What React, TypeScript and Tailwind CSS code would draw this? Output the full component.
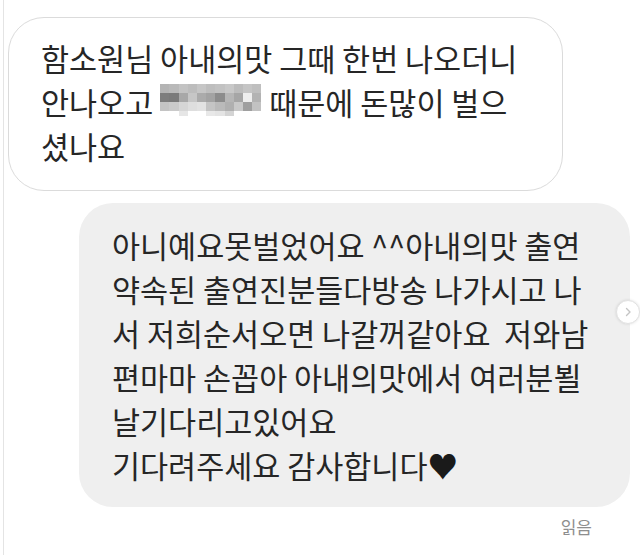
const mosaic = [
  ["bg-[#b4b4b4]", "bg-[#b9b9b9]", "bg-[#c3c3c3]", "bg-[#bdbdbd]", "bg-[#c6c6c6]", "bg-[#bebebe]", "bg-[#c2c2c2]", "bg-[#c8c8c8]", "bg-[#bcbcbc]", "bg-[#c5c5c5]", "bg-[#bfbfbf]"],
  ["bg-[#7d7d7d]", "bg-[#7a7a7a]", "bg-[#a8a8a8]", "bg-[#c6c6c6]", "bg-[#ababab]", "bg-[#a3a3a3]", "bg-[#8c8c8c]", "bg-[#b6b6b6]", "bg-[#a6a6a6]", "bg-[#eeeeee]", "bg-[#b3b3b3]"],
  ["bg-[#c4c4c4]", "bg-[#cacaca]", "bg-[#d6d6d6]", "bg-[#dedede]", "bg-[#e2e2e2]", "bg-[#c4c4c4]", "bg-[#bababa]", "bg-[#b0b0b0]", "bg-[#c9c9c9]", "bg-[#9f9f9f]", "bg-[#c2c2c2]"],
];
const mosaicTail = ["bg-white", "bg-white", "bg-[#e6e6e6]", "bg-white", "bg-white", "bg-[#e8e8e8]", "bg-[#e4e4e4]", "bg-[#d4d4d4]", "bg-white", "bg-white", "bg-white"];

const replyLines = [
  "아니예요못벌었어요 ^^아내의맛 출연",
  "약속된 출연진분들다방송 나가시고 나",
  "서 저희순서오면 나갈꺼같아요  저와남",
  "편마마 손꼽아 아내의맛에서 여러분뵐",
  "날기다리고있어요",
];

const Mosaic = () => (
  <div className="ml-[7px] mr-[8px] mt-[4px] self-start w-[101px]">
    {mosaic.map((row, r) => (
      <div key={r} className="grid grid-cols-11 h-[9px]">
        {row.map((c, i) => (
          <div key={i} className={c} />
        ))}
      </div>
    ))}
    <div className="grid grid-cols-11 h-[5px]">
      {mosaicTail.map((c, i) => (
        <div key={i} className={c} />
      ))}
    </div>
  </div>
);

export default function App() {
  return (
    <div className="relative w-[640px] h-[555px] overflow-hidden bg-white pl-[3px] font-['Noto_Sans_CJK_KR',sans-serif] text-[#262626]">
      <div className="flex h-full flex-col border-l border-[#e4e4e4] pt-[17px]">
        {/* received */}
        <div className="ml-[4px] w-[555px] rounded-[36px] border border-[#dbdbdb] px-[32px] pt-[18px] pb-[22px] text-[30.5px] leading-[44px] whitespace-pre">
          <div>함소원님 아내의맛 그때 한번 나오더니</div>
          <div className="flex items-center">
            <span>안나오고</span>
            <Mosaic />
            <span>때문에 돈많이 벌으</span>
          </div>
          <div>셨나요</div>
        </div>

        {/* sent */}
        <div className="ml-[75px] mt-[12px] w-[551px] rounded-[34px] bg-[#efefef] pl-[33px] py-[20px] text-[30.5px] leading-[44px] whitespace-pre">
          {replyLines.map((l, i) => (
            <div key={i}>{l}</div>
          ))}
          <div>
            기다려주세요 감사합니다<span className="text-[#1a1a1a]">♥</span>
          </div>
        </div>

        <div className="mr-[48px] mt-[8px] self-end text-[17px] leading-[24px] text-[#8e8e8e]">읽음</div>
      </div>

      <div className="absolute left-[616px] top-[300px] flex h-[24px] w-[24px] items-center justify-center rounded-full border border-[#e2e2e2] bg-white shadow-[0_0_3px_rgba(0,0,0,0.12)]">
        <svg width="10" height="10" viewBox="0 0 10 10" fill="none">
          <path d="M3.5 1.5 L7 5 L3.5 8.5" stroke="#c4c4c4" strokeWidth="1.4" strokeLinecap="round" strokeLinejoin="round" />
        </svg>
      </div>
    </div>
  );
}
